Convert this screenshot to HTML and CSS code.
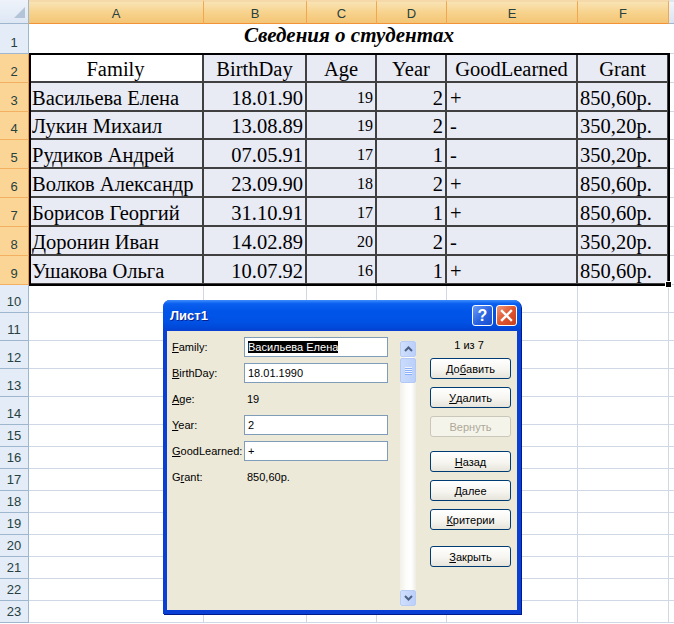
FILE: index.html
```html
<!DOCTYPE html>
<html>
<head>
<meta charset="utf-8">
<link rel="stylesheet" href="styles.css">
</head>
<body>
<div class="sheet">
  <div class="grid">
    <div class="corner"><svg width="29" height="24" viewBox="0 0 29 24"><polygon points="25,7 25,18 14,18" fill="#b3c3d8"/></svg></div>
    <div class="ch sel">A</div><div class="ch sel">B</div><div class="ch sel">C</div><div class="ch sel">D</div><div class="ch sel">E</div><div class="ch sel">F</div><div class="ch"></div>

    <div class="rh">1</div>
    <div class="c title">Сведения о студентах</div>
    <div class="c"></div>

    <div class="rh sel">2</div>
    <div class="t m active">Family</div><div class="t m">BirthDay</div><div class="t m">Age</div><div class="t m">Year</div><div class="t m">GoodLearned</div><div class="t m">Grant</div><div class="c"></div>

    <div class="rh sel">3</div>
    <div class="t l">Васильева Елена</div><div class="t r">18.01.90</div><div class="t r sm">19</div><div class="t r">2</div><div class="t l">+</div><div class="t l g">850,60р.</div><div class="c"></div>

    <div class="rh sel">4</div>
    <div class="t l">Лукин Михаил</div><div class="t r">13.08.89</div><div class="t r sm">19</div><div class="t r">2</div><div class="t l">-</div><div class="t l g">350,20р.</div><div class="c"></div>

    <div class="rh sel">5</div>
    <div class="t l">Рудиков Андрей</div><div class="t r">07.05.91</div><div class="t r sm">17</div><div class="t r">1</div><div class="t l">-</div><div class="t l g">350,20р.</div><div class="c"></div>

    <div class="rh sel">6</div>
    <div class="t l">Волков Александр</div><div class="t r">23.09.90</div><div class="t r sm">18</div><div class="t r">2</div><div class="t l">+</div><div class="t l g">850,60р.</div><div class="c"></div>

    <div class="rh sel">7</div>
    <div class="t l">Борисов Георгий</div><div class="t r">31.10.91</div><div class="t r sm">17</div><div class="t r">1</div><div class="t l">+</div><div class="t l g">850,60р.</div><div class="c"></div>

    <div class="rh sel">8</div>
    <div class="t l">Доронин Иван</div><div class="t r">14.02.89</div><div class="t r sm">20</div><div class="t r">2</div><div class="t l">-</div><div class="t l g">350,20р.</div><div class="c"></div>

    <div class="rh sel">9</div>
    <div class="t l">Ушакова Ольга</div><div class="t r">10.07.92</div><div class="t r sm">16</div><div class="t r">1</div><div class="t l">+</div><div class="t l g">850,60р.</div><div class="c"></div>

    <div class="rh">10</div><div class="c"></div><div class="c"></div><div class="c"></div><div class="c"></div><div class="c"></div><div class="c"></div><div class="c"></div>
    <div class="rh">11</div><div class="c"></div><div class="c"></div><div class="c"></div><div class="c"></div><div class="c"></div><div class="c"></div><div class="c"></div>
    <div class="rh">12</div><div class="c"></div><div class="c"></div><div class="c"></div><div class="c"></div><div class="c"></div><div class="c"></div><div class="c"></div>
    <div class="rh">13</div><div class="c"></div><div class="c"></div><div class="c"></div><div class="c"></div><div class="c"></div><div class="c"></div><div class="c"></div>
    <div class="rh">14</div><div class="c"></div><div class="c"></div><div class="c"></div><div class="c"></div><div class="c"></div><div class="c"></div><div class="c"></div>
    <div class="rh">15</div><div class="c"></div><div class="c"></div><div class="c"></div><div class="c"></div><div class="c"></div><div class="c"></div><div class="c"></div>
    <div class="rh">16</div><div class="c"></div><div class="c"></div><div class="c"></div><div class="c"></div><div class="c"></div><div class="c"></div><div class="c"></div>
    <div class="rh">17</div><div class="c"></div><div class="c"></div><div class="c"></div><div class="c"></div><div class="c"></div><div class="c"></div><div class="c"></div>
    <div class="rh">18</div><div class="c"></div><div class="c"></div><div class="c"></div><div class="c"></div><div class="c"></div><div class="c"></div><div class="c"></div>
    <div class="rh">19</div><div class="c"></div><div class="c"></div><div class="c"></div><div class="c"></div><div class="c"></div><div class="c"></div><div class="c"></div>
    <div class="rh">20</div><div class="c"></div><div class="c"></div><div class="c"></div><div class="c"></div><div class="c"></div><div class="c"></div><div class="c"></div>
    <div class="rh">21</div><div class="c"></div><div class="c"></div><div class="c"></div><div class="c"></div><div class="c"></div><div class="c"></div><div class="c"></div>
    <div class="rh">22</div><div class="c"></div><div class="c"></div><div class="c"></div><div class="c"></div><div class="c"></div><div class="c"></div><div class="c"></div>
    <div class="rh">23</div><div class="c"></div><div class="c"></div><div class="c"></div><div class="c"></div><div class="c"></div><div class="c"></div><div class="c"></div>
  </div>

  <div class="selection"><span class="handle"></span></div>

  <div class="dialog">
    <div class="titlebar">
      <span class="dtitle">Лист1</span>
      <span class="tbtn help">?</span>
      <span class="tbtn close"><svg width="13" height="13" viewBox="0 0 13 13"><path d="M2 2 L11 11 M11 2 L2 11" stroke="#fff" stroke-width="2.4" stroke-linecap="square"/></svg></span>
    </div>
    <div class="dbody">
      <div class="form">
        <div class="frow"><span class="lbl"><u>F</u>amily:</span><span class="box"><span class="hl">Васильева Елена</span></span></div>
        <div class="frow"><span class="lbl"><u>B</u>irthDay:</span><span class="box">18.01.1990</span></div>
        <div class="frow"><span class="lbl"><u>A</u>ge:</span><span class="val">19</span></div>
        <div class="frow"><span class="lbl"><u>Y</u>ear:</span><span class="box">2</span></div>
        <div class="frow"><span class="lbl"><u>G</u>oodLearned:</span><span class="box">+</span></div>
        <div class="frow"><span class="lbl">G<u>r</u>ant:</span><span class="val">850,60р.</span></div>
      </div>
      <div class="scroll">
        <div class="sbtn"><svg width="9" height="6" viewBox="0 0 9 6"><path d="M1 5 L4.5 1.5 L8 5" fill="none" stroke="#4d6185" stroke-width="2"/></svg></div>
        <div class="thumb"><span></span><span></span><span></span><span></span></div>
        <div class="track"></div>
        <div class="sbtn"><svg width="9" height="6" viewBox="0 0 9 6"><path d="M1 1 L4.5 4.5 L8 1" fill="none" stroke="#4d6185" stroke-width="2"/></svg></div>
      </div>
      <div class="panel">
        <div class="count">1 из 7</div>
        <div class="btn first">До<u>б</u>авить</div>
        <div class="btn"><u>У</u>далить</div>
        <div class="btn disabled">Вернуть</div>
        <div class="btn gap1"><u>Н</u>азад</div>
        <div class="btn"><u>Д</u>алее</div>
        <div class="btn"><u>К</u>ритерии</div>
        <div class="btn gap2"><u>З</u>акрыть</div>
      </div>
    </div>
  </div>
</div>
</body>
</html>
```

FILE: styles.css
```css
html, body {
  margin: 0;
  padding: 0;
  background: #fff;
}

.sheet {
  position: relative;
  width: 674px;
  height: 624px;
  overflow: hidden;
}

.grid {
  display: grid;
  grid-template-columns: 29px 175px 103px 70px 70px 131px 91px 60px;
  grid-template-rows: 24px 30px 29px 29px 28px 29px 29px 29px 29px 29px 28px 28px 28px 28px 28px 22px 22px 22px 22px 22px 22px 22px 22px 22px;
}

.grid > div {
  box-sizing: border-box;
  min-width: 0;
  overflow: hidden;
  white-space: nowrap;
}

.corner {
  background: linear-gradient(#eef3fa, #dde7f4);
  border-right: 1px solid #9eb6ce;
  border-bottom: 1px solid #9eb6ce;
}
.corner svg { display: block; }

.ch {
  font-family: "Liberation Sans", Arial, sans-serif;
  font-size: 13px;
  color: #27413e;
  display: flex;
  align-items: center;
  justify-content: center;
  padding-top: 2px;
  background: linear-gradient(#f3f6fb, #e4ecf7 50%, #dbe5f2);
  border-top: 2px solid #dfe7f1;
  border-right: 1px solid #9eb6ce;
  border-bottom: 1px solid #9eb6ce;
}
.ch.sel {
  background: linear-gradient(#f9e3b4, #f7d38d 50%, #f4c575);
  border-right: 1px solid #f2a650;
  border-bottom: 1px solid #f29436;
  border-top: 2px solid #f6d9a8;
}

.rh {
  font-family: "Liberation Sans", Arial, sans-serif;
  font-size: 13px;
  color: #27413e;
  display: flex;
  align-items: flex-end;
  justify-content: center;
  padding-bottom: 3px;
  background: #e4ecf7;
  border-right: 1px solid #9eb6ce;
  border-bottom: 1px solid #9eb6ce;
}
.rh.sel {
  background: #fbd596;
  border-right: 1px solid #f29436;
  border-bottom: 1px solid #f2b060;
}

.c {
  background: #fff;
  border-right: 1px solid #d0d7e5;
  border-bottom: 1px solid #d0d7e5;
}

.title {
  grid-column: span 6;
  display: flex;
  align-items: flex-end;
  justify-content: center;
  padding-bottom: 5px;
  border-right: none;
  font-family: "Liberation Serif", "Times New Roman", serif;
  font-size: 21px;
  font-weight: bold;
  font-style: italic;
  color: #000;
}

.t {
  background: #e8eaf4;
  border-right: 2px solid #404040;
  border-bottom: 2px solid #404040;
  font-family: "Liberation Serif", "Times New Roman", serif;
  font-size: 20.5px;
  line-height: 22px;
  color: #000;
  display: flex;
  align-items: flex-end;
  padding-bottom: 1px;
}
.t.active { background: #fff; }
.t.m { justify-content: center; }
.t.l { justify-content: flex-start; padding-left: 3px; }
.t.g { padding-left: 2px; }
.t.r { justify-content: flex-end; padding-right: 2px; }
.t.sm { font-size: 16px; }

.selection {
  position: absolute;
  left: 29px;
  top: 53px;
  width: 641px;
  height: 233px;
  box-sizing: border-box;
  border: 2px solid #000;
  pointer-events: none;
}
.handle {
  position: absolute;
  right: -4px;
  bottom: -4px;
  width: 5px;
  height: 5px;
  background: #000;
  border: 1px solid #fff;
}

/* Dialog */
.dialog {
  position: absolute;
  left: 163px;
  top: 300px;
  width: 358px;
  height: 314px;
  display: flex;
  flex-direction: column;
  background: #0a3fd6;
  border-radius: 7px 7px 0 0;
  box-shadow: 1px 1px 0 #001a8c;
  font-family: "Liberation Sans", Tahoma, sans-serif;
  font-size: 11px;
  color: #000;
}

.titlebar {
  height: 31px;
  flex: none;
  display: flex;
  align-items: center;
  padding: 0 4px 0 7px;
  border-radius: 7px 7px 0 0;
  background: linear-gradient(#3d8dfb 0%, #0a5ff0 12%, #0055e8 35%, #0052e5 70%, #0048d8 90%, #0a3fd0 100%);
}
.dtitle {
  flex: 1;
  color: #fff;
  font-family: "Liberation Sans", "Trebuchet MS", sans-serif;
  font-weight: bold;
  font-size: 13px;
  text-shadow: 1px 1px 0 #0a1e8a;
}
.tbtn {
  width: 19px;
  height: 19px;
  border: 1px solid #fff;
  border-radius: 3px;
  display: flex;
  align-items: center;
  justify-content: center;
  margin-left: 3px;
}
.help {
  background: linear-gradient(135deg, #6d9cf7, #2862e0 55%, #1b4fd0);
  color: #fff;
  font-weight: bold;
  font-size: 16px;
  font-family: "Liberation Sans", sans-serif;
}
.close {
  background: linear-gradient(135deg, #f09a7a, #e0552d 50%, #c8401c);
}
.close svg { display: block; }

.dbody {
  flex: 1;
  margin: 0 4px 4px 4px;
  background: #ece9d8;
  display: flex;
}

.form {
  width: 221px;
  padding: 6px 0 0 5px;
  display: flex;
  flex-direction: column;
  gap: 6px;
}
.frow {
  height: 20px;
  display: flex;
  align-items: center;
}
.lbl {
  width: 72px;
  flex: none;
}
.box {
  box-sizing: border-box;
  width: 144px;
  height: 20px;
  border: 1px solid #7f9db9;
  background: #fff;
  display: flex;
  align-items: center;
  padding-left: 3px;
}
.val { padding-left: 3px; }
.hl {
  background: #000;
  color: #fff;
}

.scroll {
  width: 16px;
  margin: 10px 0 4px 7px;
  display: flex;
  flex-direction: column;
  background: linear-gradient(to right, #f2f0e8, #fdfdfa 40%, #fff 70%, #eeece2);
}
.sbtn {
  height: 16px;
  flex: none;
  box-sizing: border-box;
  border: 1px solid #b9cdf4;
  border-radius: 2px;
  background: linear-gradient(to right, #cfdffc, #bccffa);
  display: flex;
  align-items: center;
  justify-content: center;
}
.sbtn svg { display: block; }
.thumb {
  height: 25px;
  flex: none;
  margin-top: 1px;
  box-sizing: border-box;
  border: 1px solid #b4c8f5;
  border-radius: 2px;
  background: linear-gradient(to right, #cadcfc, #bbd0fa);
  display: flex;
  flex-direction: column;
  align-items: center;
  justify-content: center;
  gap: 1px;
}
.thumb span {
  width: 7px;
  height: 1px;
  background: #eef3fe;
  box-shadow: 0 1px 0 #8cb0f8;
}
.track { flex: 1; }

.panel {
  flex: 1;
  padding: 8px 0 0 14px;
  display: flex;
  flex-direction: column;
}
.count {
  width: 78px;
  text-align: center;
  line-height: 13px;
}
.btn {
  box-sizing: border-box;
  width: 81px;
  height: 21px;
  margin-top: 8px;
  border: 1px solid #003c74;
  border-radius: 3px;
  background: linear-gradient(#ffffff, #f6f5f0 55%, #e6e4da);
  display: flex;
  align-items: center;
  justify-content: center;
}
.btn.first { margin-top: 6px; }
.btn.gap1 { margin-top: 14px; }
.btn.gap2 { margin-top: 16px; }
.btn.disabled {
  border-color: #c9c7ba;
  background: #f5f4ea;
  color: #aca899;
}
```
